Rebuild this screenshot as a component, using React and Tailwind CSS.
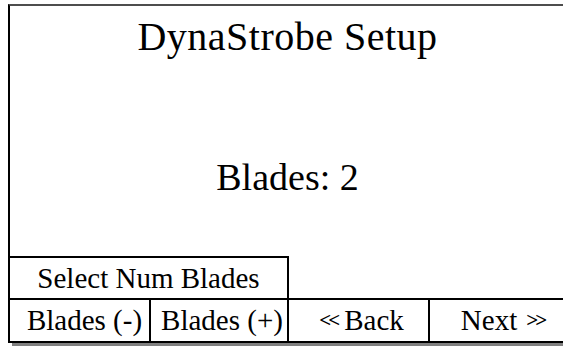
export default function App() {
  const serif = { fontFamily: '"Liberation Serif", "Times New Roman", serif' };
  return (
    <div className="w-[563px] h-[346px] bg-white overflow-hidden text-black" style={serif}>
      <div className="ml-[8px] mt-[4px] w-[600px] h-[339px] border-t-2 border-l-2 border-t-[#4d4d4d] border-l-black flex flex-col">
        <div className="h-[250px] flex flex-col w-[555px]">
          <div className="mt-[11px] h-[40px] leading-none text-[40px] tracking-[0.5px] text-center">DynaStrobe Setup</div>
          <div className="mt-[101px] h-[38px] leading-none text-[38px] text-center">Blades: 2</div>
        </div>
        <div className="h-[42px] w-[279px] border-t-2 border-r-2 border-black flex items-center justify-center text-[29px] leading-none">
          Select Num Blades
        </div>
        <div className="h-[45px] border-t-2 border-b-2 border-black flex shadow-[2px_3px_0_#808080] text-[29px] leading-none">
          <div className="w-[139px] flex items-center justify-center pl-[10px]">Blades (-)</div>
          <div className="w-[138px] border-l-2 border-black flex items-center justify-center pl-[6px]">Blades (+)</div>
          <div className="w-[141px] border-l-2 border-black flex items-center justify-center pl-[6px]">
            <span className="text-[21px] mr-[7px] tracking-[-3px] font-bold">&lt;&lt;</span>Back
          </div>
          <div className="w-[141px] border-l-2 border-black flex items-center justify-center pl-[6px]">
            Next<span className="text-[21px] ml-[9px] tracking-[-3px] font-bold">&gt;&gt;</span>
          </div>
        </div>
      </div>
    </div>
  );
}
